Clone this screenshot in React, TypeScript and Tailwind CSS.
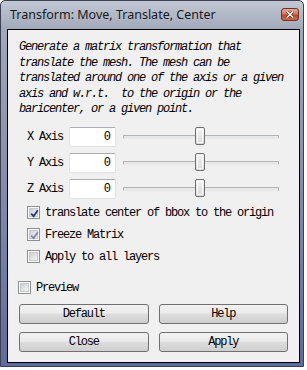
import React from 'react';

const mono = { fontFamily: '"Liberation Mono", "DejaVu Sans Mono", monospace' };

const CheckBox: React.FC<{ checked?: boolean; dim?: boolean }> = ({ checked, dim }) => (
  <div className="w-[13px] h-[13px] border border-[#8e8f8f] bg-white p-[1px] shrink-0">
    <div className="w-full h-full bg-gradient-to-br from-[#cbcfd5] to-[#f6f6f6] border border-[#c8c8c8] relative">
      {checked && (
        <svg width="9" height="9" viewBox="0 0 9 9" className="absolute left-0 top-0">
          <path
            d="M1.2 4.6 L3.6 7.2 L7.8 1.2"
            fill="none"
            stroke={dim ? '#7a89b4' : '#21358a'}
            strokeWidth="1.8"
          />
        </svg>
      )}
    </div>
  </div>
);

const Slider: React.FC = () => (
  <div className="relative flex-1 h-[20px] flex items-center">
    <div className="w-full h-[4px] border border-[#b4b4b4] border-b-[#e8e8e8] bg-[#e6e7e8] rounded-[1px]" />
    <div className="absolute left-[72px] top-0 w-[10px] h-[18px] border border-[#707070] rounded-[2px] bg-gradient-to-b from-[#f4f4f4] to-[#d9d9d9] p-[1px]">
      <div className="w-full h-full border border-white/80 rounded-[1px]" />
    </div>
  </div>
);

const AxisRow: React.FC<{ label: string }> = ({ label }) => (
  <div className="flex items-center h-[20px]">
    <span className="w-[42px] text-[12px] tracking-[-1.2px] text-black" style={mono}>{label}</span>
    <div className="w-[47px] h-[20px] bg-white border border-[#dfe1e5] border-t-[#abadb3] rounded-[2px] flex items-center justify-end pr-[4px] text-[12px] text-black" style={mono}>0</div>
    <div className="w-[7px]" />
    <Slider />
  </div>
);

const CheckRow: React.FC<{ label: string; checked?: boolean; dim?: boolean }> = ({ label, checked, dim }) => (
  <div className="flex items-center gap-[5px] h-[16px]">
    <CheckBox checked={checked} dim={dim} />
    <span className="text-[12px] tracking-[-1.2px] text-black whitespace-nowrap" style={mono}>{label}</span>
  </div>
);

const Button: React.FC<{ label: string }> = ({ label }) => (
  <div className="flex-1 h-[20px] border border-[#707070] rounded-[3px] flex items-center justify-center text-[12px] tracking-[-1.2px] text-black bg-[linear-gradient(to_bottom,#f2f2f2_0%,#ebebeb_45%,#dddddd_50%,#cfcfcf_100%)]" style={mono}>
    {label}
  </div>
);

const description = [
  'Generate a matrix transformation that',
  'translate the mesh. The mesh can be',
  'translated around one of the axis or a given',
  'axis and w.r.t.  to the origin or the',
  'baricenter, or a given point.',
];

export default function App() {
  return (
    <div className="w-[307px] h-[370px] bg-white">
      <div className="w-[304px] h-[367px] border border-[#3c4050] rounded-t-[5px] flex flex-col bg-[linear-gradient(to_bottom,#c2c8d3_0%,#a0a8b9_8%,#8a94af_40%,#5c6b9e_100%)]">
        {/* Title bar */}
        <div className="h-[28px] flex items-center pl-[9px] pr-[4px] shrink-0">
          <span className="text-[12.5px] text-[#1b1b1b] flex-1" style={{ fontFamily: '"Noto Sans", "Open Sans", sans-serif' }}>
            Transform: Move, Translate, Center
          </span>
          <div className="w-[18px] h-[13px] rounded-[3px] border border-[#6b3324] bg-[linear-gradient(to_bottom,#eaa48e_0%,#d9785c_45%,#c2442a_55%,#d0694a_100%)] flex items-center justify-center mb-[1px]">
            <svg width="8" height="7" viewBox="0 0 8 7">
              <path d="M1 0.5 L7 6.5 M7 0.5 L1 6.5" stroke="#4a2a22" strokeWidth="2.6" />
              <path d="M1 0.5 L7 6.5 M7 0.5 L1 6.5" stroke="#ffffff" strokeWidth="1.5" />
            </svg>
          </div>
        </div>

        {/* Client area */}
        <div className="flex-1 ml-[6px] mr-[3px] mb-[3px] border border-black bg-[#f0f0f0] flex flex-col">
          <div className="pl-[11px] pt-[10px] text-[12px] italic tracking-[-1.2px] leading-[15.5px] text-black" style={mono}>
            {description.map(line => (
              <div key={line} className="whitespace-pre">{line}</div>
            ))}
          </div>

          <div className="pl-[19px] pr-[20px] mt-[9px] flex flex-col gap-[6px]">
            <AxisRow label="X Axis" />
            <AxisRow label="Y Axis" />
            <AxisRow label="Z Axis" />
          </div>

          <div className="pl-[19px] mt-[6px] flex flex-col gap-[6px]">
            <CheckRow label="translate center of bbox to the origin" checked />
            <CheckRow label="Freeze Matrix" checked dim />
            <CheckRow label="Apply to all layers" />
          </div>

          <div className="pl-[10px] mt-[15px]">
            <CheckRow label="Preview" />
          </div>

          <div className="px-[11px] mt-[8px] grid grid-cols-2 gap-x-[10px] gap-y-[8px]">
            <Button label="Default" />
            <Button label="Help" />
            <Button label="Close" />
            <Button label="Apply" />
          </div>
        </div>
      </div>
    </div>
  );
}
